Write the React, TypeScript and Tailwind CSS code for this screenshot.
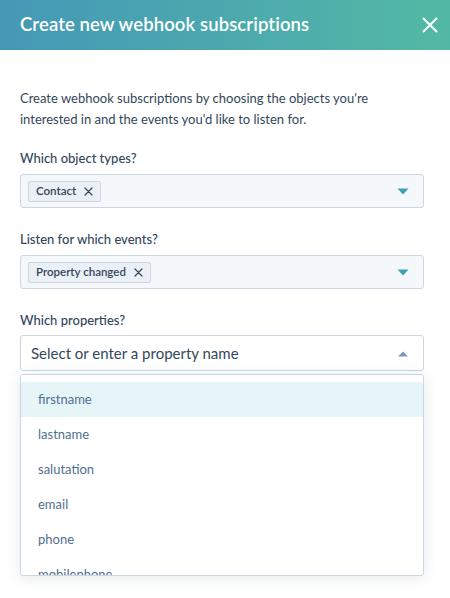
import React from "react";

function Caret({ up = false, color }: { up?: boolean; color: string }) {
  return (
    <svg width="12" height="7" viewBox="0 0 12 7" className="shrink-0">
      {up ? (
        <path d="M1 6.5 L6 1.5 L11 6.5 Z" fill={color} />
      ) : (
        <path d="M0.5 0.5 L11.5 0.5 L6 6.5 Z" fill={color} />
      )}
    </svg>
  );
}

function SmallX() {
  return (
    <svg width="9" height="9" viewBox="0 0 9 9" className="shrink-0">
      <path d="M1 1 L8 8 M8 1 L1 8" stroke="#33475b" strokeWidth="1.2" strokeLinecap="round" />
    </svg>
  );
}

function Tag({ label }: { label: string }) {
  return (
    <div className="flex items-center gap-[8px] h-[21px] px-[7px] bg-[#eaf0f6] border border-[#cbd6e2] rounded-[2px] text-[11.5px] font-semibold text-[#33475b]">
      <span>{label}</span>
      <SmallX />
    </div>
  );
}

function TagSelect({ label }: { label: string }) {
  return (
    <div className="flex items-center justify-between h-[34px] pl-[7px] pr-[14px] bg-[#f5f8fa] border border-[#cbd6e2] rounded-[3px]">
      <Tag label={label} />
      <Caret color="#3e9fb5" />
    </div>
  );
}

export default function App() {
  const items = ["firstname", "lastname", "salutation", "email", "phone", "mobilephone"];
  return (
    <div
      className="w-[450px] h-[598px] bg-white overflow-hidden"
      style={{ fontFamily: "Lato, 'Noto Sans', sans-serif" }}
    >
      <div className="h-[50px] flex items-center justify-between pl-[20px] pr-[12px] bg-gradient-to-r from-[#4598b6] to-[#53b9a4]">
        <h1 className="text-[18.5px] font-semibold text-white tracking-[0.1px]">
          Create new webhook subscriptions
        </h1>
        <svg width="16" height="16" viewBox="0 0 16 16">
          <path d="M1.5 1.5 L14.5 14.5 M14.5 1.5 L1.5 14.5" stroke="white" strokeWidth="2" strokeLinecap="round" />
        </svg>
      </div>

      <div className="pl-[20px] pr-[26px] pt-[38px]">
        <p className="text-[13px] leading-[21px] text-[#33475b]">
          Create webhook subscriptions by choosing the objects you're
          <br />
          interested in and the events you'd like to listen for.
        </p>

        <div className="mt-[18px] text-[13px] font-medium text-[#33475b] leading-[20px]">Which object types?</div>
        <div className="mt-[6px]">
          <TagSelect label="Contact" />
        </div>

        <div className="mt-[21px] text-[13px] font-medium text-[#33475b] leading-[20px]">Listen for which events?</div>
        <div className="mt-[6px]">
          <TagSelect label="Property changed" />
        </div>

        <div className="mt-[21px] text-[13px] font-medium text-[#33475b] leading-[20px]">Which properties?</div>
        <div className="mt-[5px] relative">
          <div className="flex items-center justify-between h-[36px] pl-[10px] pr-[14px] bg-white border border-[#cbd6e2] rounded-[3px]">
            <span className="text-[15px] text-[#33475b]">Select or enter a property name</span>
            <Caret up color="#7c98b6" />
          </div>
          <div className="absolute left-0 right-0 top-[39px] h-[202px] bg-white border border-[#cbd6e2] rounded-[3px] shadow-[0_2px_14px_rgba(45,62,80,0.12)] overflow-hidden pt-[7px]">
            {items.map((it, i) => (
              <div
                key={it}
                className={`h-[35px] flex items-center pl-[17px] text-[13px] text-[#516f90] ${i === 0 ? "bg-[#e5f5f8]" : ""}`}
              >
                {it}
              </div>
            ))}
          </div>
        </div>
      </div>
    </div>
  );
}
